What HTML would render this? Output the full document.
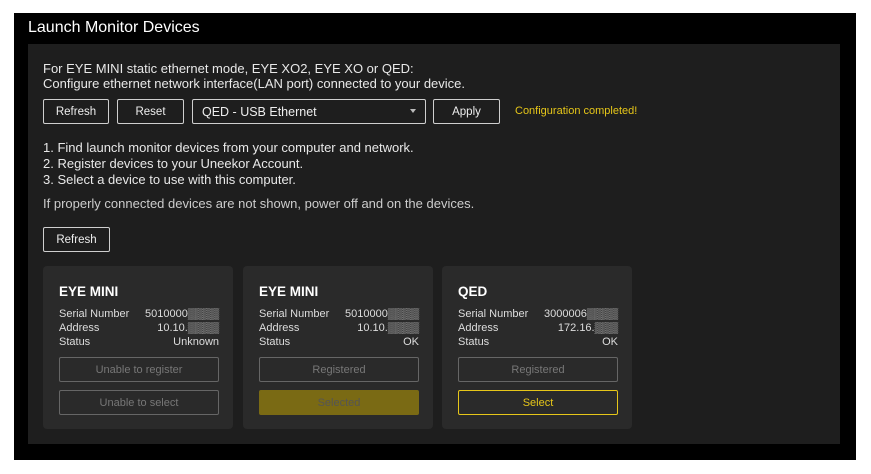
<!DOCTYPE html>
<html><head><style>
body{margin:0;width:871px;height:474px;background:#fff;font-family:"Liberation Sans",sans-serif;position:relative;overflow:hidden}
.a{position:absolute}
.outer{left:14px;top:13px;width:842px;height:447px;background:#000}
.inner{left:28px;top:44px;width:812px;height:400px;background:#1e1e1e}
.t{color:#e8e8e8;font-size:13px;white-space:nowrap}
.btn{border:1px solid #cfcfcf;border-radius:2px;color:#eee;font-size:11.5px;display:flex;align-items:center;justify-content:center;box-sizing:border-box;background:#1e1e1e}
.card{background:#2a2a2a;border-radius:4px;width:190px;height:163px;top:266px}
.card .h{position:absolute;left:16px;top:18px;color:#fff;font-weight:bold;font-size:13.5px}
.row{position:absolute;left:16px;width:160px;font-size:11px;color:#ddd;display:flex;justify-content:space-between}
.cb{position:absolute;left:16px;width:160px;height:25px;box-sizing:border-box;border:1px solid #666;border-radius:2px;color:#777;font-size:11px;display:flex;align-items:center;justify-content:center}
</style></head><body>
<div class="a outer"></div>
<div class="a inner"></div>
<div class="a t" style="left:28px;top:19px;font-size:16px;color:#fff">Launch Monitor Devices</div>
<div class="a t" style="left:43px;top:61px">For EYE MINI static ethernet mode, EYE XO2, EYE XO or QED:</div>
<div class="a t" style="left:43px;top:76px">Configure ethernet network interface(LAN port) connected to your device.</div>
<div class="a btn" style="left:43px;top:99px;width:66px;height:25px">Refresh</div>
<div class="a btn" style="left:117px;top:99px;width:67px;height:25px">Reset</div>
<div class="a btn" style="left:192px;top:99px;width:234px;height:25px;justify-content:flex-start;padding-left:9px;font-size:12.5px">QED - USB Ethernet<span style="position:absolute;right:9px;top:9px;border:3px solid transparent;border-top:4px solid #bbb"></span></div>
<div class="a btn" style="left:433px;top:99px;width:67px;height:25px">Apply</div>
<div class="a t" style="left:515px;top:105px;font-size:11px;color:#e6c619">Configuration completed!</div>
<div class="a t" style="left:43px;top:140px">1. Find launch monitor devices from your computer and network.</div>
<div class="a t" style="left:43px;top:156px">2. Register devices to your Uneekor Account.</div>
<div class="a t" style="left:43px;top:172px">3. Select a device to use with this computer.</div>
<div class="a t" style="left:43px;top:196px;color:#ccc">If properly connected devices are not shown, power off and on the devices.</div>
<div class="a btn" style="left:43px;top:227px;width:67px;height:25px">Refresh</div>

<div class="a card" style="left:43px"><div class="h">EYE MINI</div>
<div class="row" style="top:42px"><span>Serial Number</span><span>5010000▒▒▒▒</span></div>
<div class="row" style="top:56px"><span>Address</span><span>10.10.▒▒▒▒</span></div>
<div class="row" style="top:70px"><span>Status</span><span>Unknown</span></div>
<div class="cb" style="top:91px">Unable to register</div>
<div class="cb" style="top:124px">Unable to select</div></div>

<div class="a card" style="left:243px"><div class="h">EYE MINI</div>
<div class="row" style="top:42px"><span>Serial Number</span><span>5010000▒▒▒▒</span></div>
<div class="row" style="top:56px"><span>Address</span><span>10.10.▒▒▒▒</span></div>
<div class="row" style="top:70px"><span>Status</span><span>OK</span></div>
<div class="cb" style="top:91px">Registered</div>
<div class="cb" style="top:124px;background:#7a6a14;border-color:#7a6a14;color:#555">Selected</div></div>

<div class="a card" style="left:442px"><div class="h">QED</div>
<div class="row" style="top:42px"><span>Serial Number</span><span>3000006▒▒▒▒</span></div>
<div class="row" style="top:56px"><span>Address</span><span>172.16.▒▒▒</span></div>
<div class="row" style="top:70px"><span>Status</span><span>OK</span></div>
<div class="cb" style="top:91px">Registered</div>
<div class="cb" style="top:124px;border-color:#e6c619;color:#e6c619">Select</div></div>
</body></html>
